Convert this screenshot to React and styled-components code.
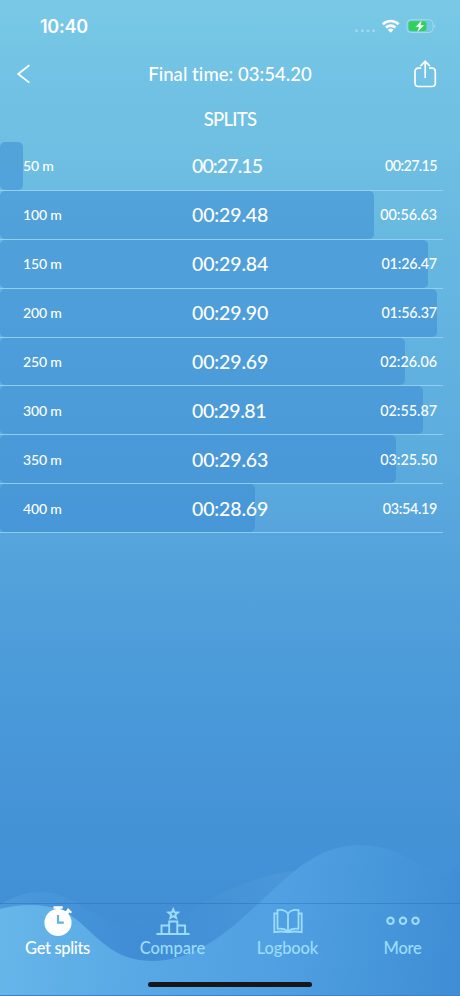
import React from "react";
import styled, { createGlobalStyle } from "styled-components";

const GlobalStyle = createGlobalStyle`
  body {
    margin: 0;
    overflow: hidden;
  }
`;

const Screen = styled.div`
  position: relative;
  width: 460px;
  height: 996px;
  display: flex;
  flex-direction: column;
  overflow: hidden;
  color: #fff;
  font-family: Futura, Lato, sans-serif;
  font-weight: 500;
  background: linear-gradient(
    180deg,
    #79c9e6 0px,
    #70c1e4 90px,
    #6fbfe3 150px,
    #66b7e0 260px,
    #5eafdf 420px,
    #57a5dc 530px,
    #4b9ad9 680px,
    #4391d6 860px,
    #3f8bd4 996px
  );
`;

const Waves = styled.svg`
  position: absolute;
  left: 0;
  bottom: 0;
`;

const StatusBar = styled.div`
  height: 50px;
  box-sizing: border-box;
  padding: 1px 25px 0 40px;
  display: flex;
  align-items: center;
  justify-content: space-between;
`;

const Clock = styled.div`
  padding-top: 1px;
  font: 600 18px Inter, sans-serif;
  letter-spacing: -0.25px;
`;

const Header = styled.div`
  height: 47px;
  padding: 0 23px 0 17px;
  display: grid;
  grid-template-columns: 46px 1fr 40px;
  align-items: center;
`;

const Title = styled.div`
  text-align: center;
  font-size: 18.5px;
  letter-spacing: 0.05px;
  white-space: nowrap;
`;

const IconButton = styled.button`
  display: flex;
  justify-content: ${(props) => (props.$end ? "flex-end" : "flex-start")};
  padding: 0;
  border: 0;
  background: none;
  color: inherit;
`;

const Heading = styled.div`
  height: 45px;
  line-height: 44px;
  text-align: center;
  font-size: 18.5px;
  letter-spacing: -0.75px;
`;

const List = styled.div`
  width: 443px;
`;

const Row = styled.div`
  position: relative;
  height: 47.9px;
  display: grid;
  grid-template-columns: 100px 1fr 100px;
  align-items: center;
  padding: 0 6px 0 23px;
  border-bottom: 1px solid rgba(160, 215, 246, 0.75);
`;

const Bar = styled.div`
  position: absolute;
  left: 0;
  top: 0;
  bottom: 0;
  border-radius: 5px;
  background: rgba(56, 136, 212, 0.5);
`;

const Distance = styled.div`
  position: relative;
  font-size: 14px;
  letter-spacing: -0.15px;
`;

const Split = styled.div`
  position: relative;
  padding-left: 69px;
  font-size: 19.5px;
  letter-spacing: ${(props) => props.$tracking}px;
`;

const Total = styled.div`
  position: relative;
  text-align: right;
  font-size: 14.3px;
  letter-spacing: ${(props) => props.$tracking}px;
`;

const TabBar = styled.div`
  position: relative;
  height: 93px;
  box-sizing: border-box;
  margin-top: auto;
  display: grid;
  grid-template-columns: repeat(4, 1fr);
  border-top: 1px solid rgba(35, 105, 175, 0.4);
  border-bottom: 1px solid #3a83cb;
`;

const Tab = styled.div`
  display: flex;
  flex-direction: column;
  align-items: center;
  color: ${(props) => (props.$active ? "#fff" : "#9bdcff")};
`;

const TabLabel = styled.div`
  font-size: 16.5px;
  line-height: 20px;
  letter-spacing: ${(props) => props.$spacing}px;
`;

const HomeIndicator = styled.div`
  position: absolute;
  left: 148px;
  bottom: 8px;
  width: 164px;
  height: 5.5px;
  border-radius: 3px;
  background: #141719;
`;

const splits = [
  { distance: "50 m", split: "00:27.15", total: "00:27.15", bar: 23, tracking: [-0.9, -0.6] },
  { distance: "100 m", split: "00:29.48", total: "00:56.63", bar: 374, tracking: [-0.15, 0] },
  { distance: "150 m", split: "00:29.84", total: "01:26.47", bar: 428, tracking: [-0.15, -0.15] },
  { distance: "200 m", split: "00:29.90", total: "01:56.37", bar: 437, tracking: [-0.15, -0.15] },
  { distance: "250 m", split: "00:29.69", total: "02:26.06", bar: 405, tracking: [-0.15, 0] },
  { distance: "300 m", split: "00:29.81", total: "02:55.87", bar: 423, tracking: [-0.4, 0] },
  { distance: "350 m", split: "00:29.63", total: "03:25.50", bar: 396, tracking: [-0.15, 0] },
  { distance: "400 m", split: "00:28.69", total: "03:54.19", bar: 255, tracking: [-0.15, -0.3] },
];

const StatusIcons = () => (
  <svg width="82" height="20" viewBox="353 15 82 20">
    <g fill="#a0d7ef">
      <circle cx="356.5" cy="29.8" r="1.5" />
      <circle cx="362.3" cy="29.8" r="1.5" />
      <circle cx="368" cy="29.8" r="1.5" />
      <circle cx="373.7" cy="29.8" r="1.5" />
    </g>
    <g fill="none" stroke="#fff" strokeWidth="2.7">
      <path d="M382.8 23.2a11.3 11.3 0 0 1 15.8 0" />
      <path d="M386 26.6a6.8 6.8 0 0 1 9.4 0" />
    </g>
    <path d="M387.9 28.8a4 4 0 0 1 5.6 0l-2.8 2.9z" fill="#fff" />
    <rect x="407" y="18.7" width="26" height="12.8" rx="4" fill="none" stroke="#a6d9ef" />
    <rect x="408.5" y="20.2" width="18" height="9.8" rx="2.4" fill="#30d158" />
    <path d="M434 23.4c1.5.5 1.5 3 0 3.6z" fill="#a6d9ef" />
    <path d="M421.6 19.4l-6 6.5h3.3l-1.5 5.2 6.8-6.9h-3.6z" fill="#fff" stroke="#7fd9a5" strokeWidth=".3" />
  </svg>
);

const BackIcon = () => (
  <svg width="13" height="20" viewBox="0 0 13 20" fill="none" stroke="#fff" strokeWidth="1.8">
    <path d="M12.3 1.2L1.2 10l11.1 8.6" />
  </svg>
);

const ShareIcon = () => (
  <svg width="24" height="28" viewBox="0 0 24 28" fill="none" stroke="#fff" strokeWidth="1.7">
    <path d="M8.2 8.2H5a3 3 0 0 0-3 3v12.3a3 3 0 0 0 3 3h14.3a3 3 0 0 0 3-3V11.2a3 3 0 0 0-3-3h-3.2" />
    <path d="M12.2 18V1.5M7.4 6.2l4.8-4.9L17 6.2" />
  </svg>
);

const StopwatchIcon = () => (
  <svg width="34" height="34" viewBox="0 0 34 34">
    <circle cx="17" cy="18.5" r="13.6" fill="#fff" />
    <path
      d="M12.5 2.2h9.2v2.5h-2.4V7h-4.4V4.7h-2.4zM27 4l4 3.9-1.2 1.5-1.4-.8-1.7 1.7-2.7-2.5 1.8-1.7z"
      fill="#fff"
    />
    <path d="M17 10.9v7.7h5.8" fill="none" stroke="#62b1e6" strokeWidth="2.1" />
  </svg>
);

const PodiumIcon = () => (
  <svg width="34" height="34" viewBox="0 0 34 34" fill="none" stroke="currentColor" strokeWidth="1.9">
    <path d="M17.2 5.2l1.3 3.1 3.4.2-2.6 2.2.9 3.3-3-1.8-2.9 1.8.8-3.3-2.6-2.2 3.4-.2z" />
    <path d="M.5 30h33M5.5 30V21.5h7.7M13.2 30V17.5h8.1V30M21.3 21.5h7.8V30" />
  </svg>
);

const BookIcon = () => (
  <svg width="34" height="34" viewBox="0 0 34 34" fill="none" stroke="currentColor" strokeWidth="1.8">
    <path d="M17 9.5C14.5 6.5 10 5.6 6.5 6.2v18.6c4-.6 8 .2 10.5 2.8 2.5-2.6 6.5-3.4 10.5-2.8V6.2C24 5.6 19.5 6.5 17 9.5zM17 9.5v18" />
    <path d="M6.5 9.5H3.3v18.7c4.500-.8 9-.9 12.200-.2h3c3.200-.7 7.700-.6 12.200.2V9.500h-3.200" />
  </svg>
);

const MoreIcon = () => (
  <svg width="34" height="34" viewBox="0 0 34 34" fill="none" stroke="currentColor" strokeWidth="2.1">
    <circle cx="4.5" cy="16.8" r="3.2" />
    <circle cx="17" cy="16.8" r="3.2" />
    <circle cx="29.5" cy="16.8" r="3.2" />
  </svg>
);

const tabs = [
  { label: "Get splits", Icon: StopwatchIcon, spacing: -0.35 },
  { label: "Compare", Icon: PodiumIcon, spacing: -0.05 },
  { label: "Logbook", Icon: BookIcon, spacing: -0.15 },
  { label: "More", Icon: MoreIcon, spacing: -0.3 },
];

const Background = () => (
  <Waves width="460" height="156" viewBox="0 840 460 156">
    <defs>
      <linearGradient id="front" gradientUnits="userSpaceOnUse" x1="0" y1="890" x2="460" y2="960">
        <stop offset="0" stopColor="#67b7ea" />
        <stop offset=".3" stopColor="#59a9e5" />
        <stop offset=".6" stopColor="#50a0e2" />
        <stop offset="1" stopColor="#3f8ed5" />
      </linearGradient>
      <linearGradient id="back" gradientUnits="userSpaceOnUse" x1="0" y1="0" x2="460" y2="0">
        <stop offset="0" stopColor="#4b9adb" />
        <stop offset=".3" stopColor="#408dd6" />
        <stop offset=".6" stopColor="#4996d9" />
        <stop offset="1" stopColor="#4a99db" />
      </linearGradient>
    </defs>
    <path
      d="M0 905C20 891 45 888 65 897C90 909 110 927 142 926C182 922 200 901 230 889C260 877 280 871 300 871V996H0z"
      fill="url(#back)"
    />
    <path
      d="M0 909C20 904 42 903 60 910C90 921 103 961 152 961C205 961 245 915 275 888C300 865 325 845 360 845C395 845 415 863 443 877Q452 873 460 863V996H0z"
      fill="url(#front)"
    />
  </Waves>
);

const App = () => {
  return (
    <Screen>
      <GlobalStyle />
      <Background />
      <StatusBar>
        <Clock>10:40</Clock>
        <StatusIcons />
      </StatusBar>
      <Header>
        <IconButton aria-label="Back">
          <BackIcon />
        </IconButton>
        <Title>Final time: 03:54.20</Title>
        <IconButton aria-label="Share" $end>
          <ShareIcon />
        </IconButton>
      </Header>
      <Heading>SPLITS</Heading>
      <List>
        {splits.map((item) => (
          <Row key={item.distance}>
            <Bar style={{ width: item.bar }} />
            <Distance>{item.distance}</Distance>
            <Split $tracking={item.tracking[0]}>{item.split}</Split>
            <Total $tracking={item.tracking[1]}>{item.total}</Total>
          </Row>
        ))}
      </List>
      <TabBar>
        {tabs.map(({ label, Icon, spacing }, index) => (
          <Tab key={label} $active={index === 0}>
            <Icon />
            <TabLabel $spacing={spacing}>{label}</TabLabel>
          </Tab>
        ))}
        <HomeIndicator />
      </TabBar>
    </Screen>
  );
};

export default App;
